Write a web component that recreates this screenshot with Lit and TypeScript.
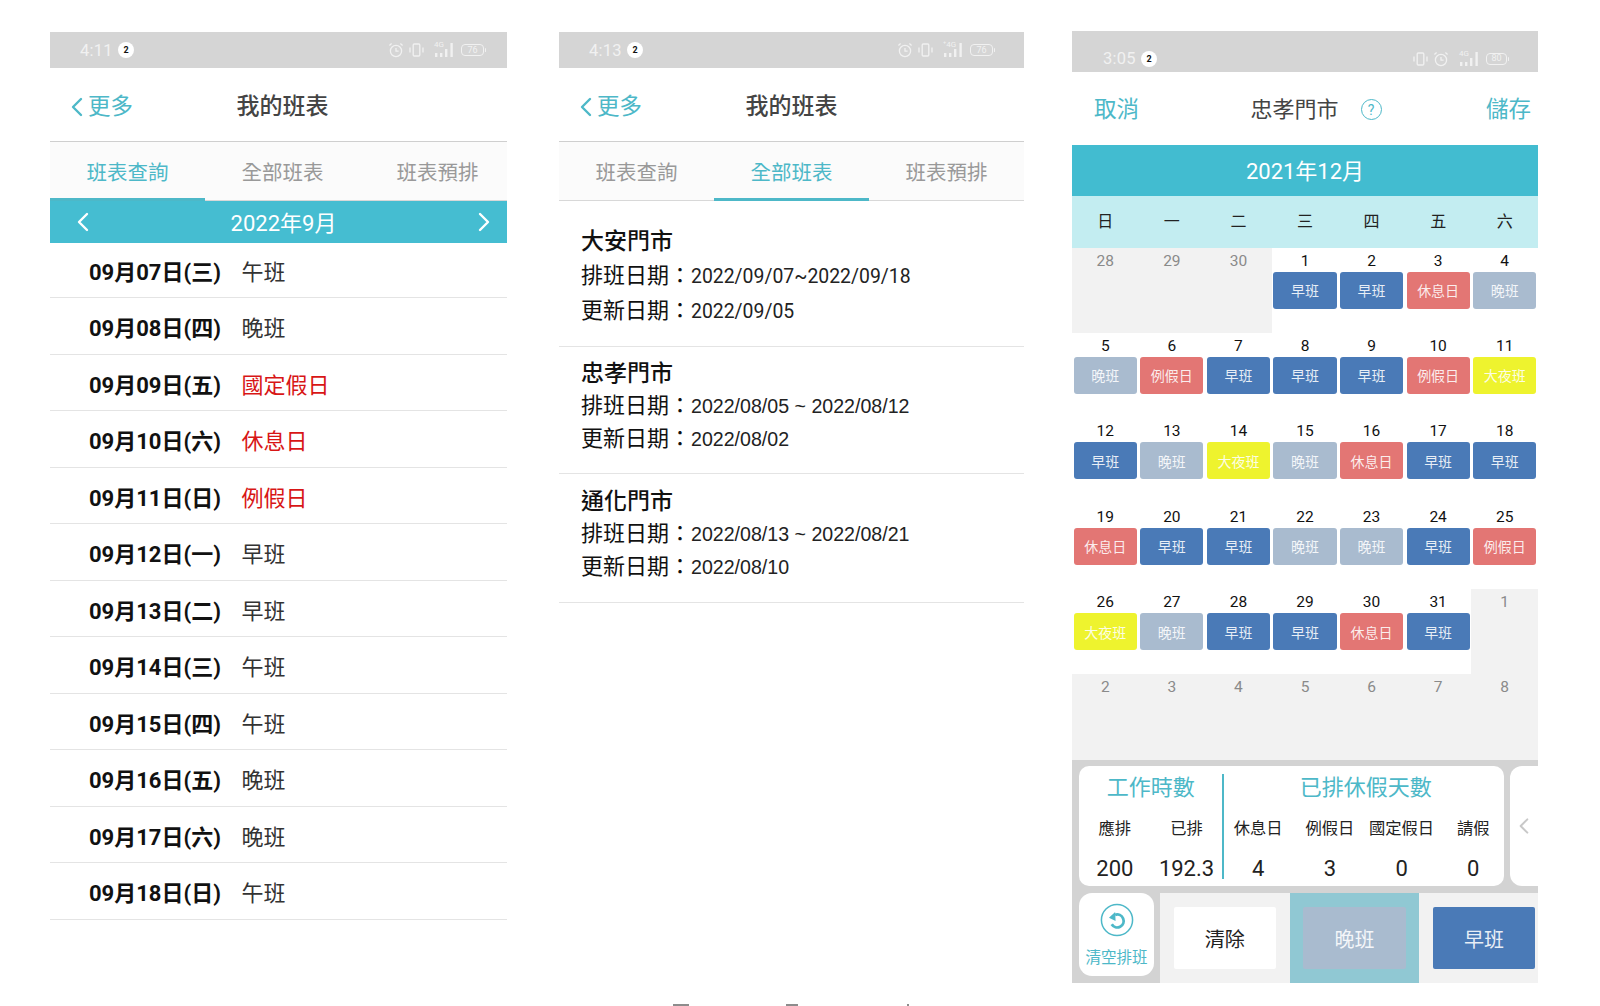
import { LitElement, html, css, svg } from "lit";
import { customElement } from "lit/decorators.js";

const CHEV_L = svg`<polyline points="10,2 2,10 10,18" fill="none" stroke="currentColor" stroke-width="2.4" stroke-linecap="round" stroke-linejoin="round"/>`;
const CHEV_R = svg`<polyline points="2,2 10,10 2,18" fill="none" stroke="currentColor" stroke-width="2.4" stroke-linecap="round" stroke-linejoin="round"/>`;

const chev = (dir: "l" | "r", cls: string) =>
  html`<svg class=${cls} viewBox="0 0 12 20">${dir === "l" ? CHEV_L : CHEV_R}</svg>`;

const alarm = html`<svg class="ic" width="16" height="16" viewBox="0 0 16 16" fill="none" stroke="currentColor" stroke-width="1.3">
  <circle cx="8" cy="9" r="5.6"/><path d="M8 6v3.2h2.6M1.4 3.6 3.6 1.6M14.6 3.6 12.4 1.6"/></svg>`;
const vib = html`<svg class="ic" width="15" height="14" viewBox="0 0 15 14" fill="none" stroke="currentColor" stroke-width="1.3">
  <rect x="4.2" y="1" width="6.6" height="12" rx="1"/><path d="M1 4.5v5M14 4.5v5"/></svg>`;
const signal = (label: string) => html`<span class="sig"><span class="sig-t">${label}</span>
  <svg width="20" height="14" viewBox="0 0 20 14" fill="currentColor">
    <rect x="1" y="10" width="2.4" height="4"/><rect x="6" y="10" width="2.4" height="4"/>
    <rect x="11" y="6" width="2.4" height="8"/><rect x="16.4" y="0" width="2.4" height="14"/></svg></span>`;
const batt = (v: string) => html`<span class="batt"><span>${v}</span></span>`;

const status = (time: string, batV: string, cls: string, order: "av" | "va", sig: string) => html`
  <div class="status ${cls}">
    <span class="time">${time}</span><span class="badge">2</span>
    <span class="icons">
      ${order === "av" ? html`${alarm}${vib}` : html`${vib}${alarm}`}
      ${signal(sig)}${batt(batV)}
    </span>
  </div>`;

const navHead = html`<div class="head">
  <span class="back">${chev("l", "back-c")}更多</span>
  <span class="title">我的班表</span><span></span>
</div>`;

const tabs = (active: number) => html`<div class="tabs">
  ${["班表查詢", "全部班表", "班表預排"].map(
    (t, i) => html`<div class="tab ${i === active ? "on" : ""}">${t}</div>`
  )}
</div>`;

const rows: [string, string, boolean][] = [
  ["09月07日(三)", "午班", false],
  ["09月08日(四)", "晚班", false],
  ["09月09日(五)", "國定假日", true],
  ["09月10日(六)", "休息日", true],
  ["09月11日(日)", "例假日", true],
  ["09月12日(一)", "早班", false],
  ["09月13日(二)", "早班", false],
  ["09月14日(三)", "午班", false],
  ["09月15日(四)", "午班", false],
  ["09月16日(五)", "晚班", false],
  ["09月17日(六)", "晚班", false],
  ["09月18日(日)", "午班", false],
];

const stores = [
  { cls: "s1", name: "大安門市", range: "2022/09/07~2022/09/18", upd: "2022/09/05" },
  { cls: "s2", name: "忠孝門市", range: "2022/08/05 ~ 2022/08/12", upd: "2022/08/02" },
  { cls: "s3", name: "通化門市", range: "2022/08/13 ~ 2022/08/21", upd: "2022/08/10" },
];

type Cell = [number, string, boolean];
const M = "早班", N = "晚班", R = "休息日", L = "例假日", Y = "大夜班";
const cal: Cell[] = [
  [28, "", true], [29, "", true], [30, "", true], [1, M, false], [2, M, false], [3, R, false], [4, N, false],
  [5, N, false], [6, L, false], [7, M, false], [8, M, false], [9, M, false], [10, L, false], [11, Y, false],
  [12, M, false], [13, N, false], [14, Y, false], [15, N, false], [16, R, false], [17, M, false], [18, M, false],
  [19, R, false], [20, M, false], [21, M, false], [22, N, false], [23, N, false], [24, M, false], [25, L, false],
  [26, Y, false], [27, N, false], [28, M, false], [29, M, false], [30, R, false], [31, M, false], [1, "", true],
  [2, "", true], [3, "", true], [4, "", true], [5, "", true], [6, "", true], [7, "", true], [8, "", true],
];
const chipCls: Record<string, string> = { [M]: "m", [N]: "n", [R]: "r", [L]: "r", [Y]: "y" };

const stats: [string, string][] = [
  ["應排", "200"], ["已排", "192.3"], ["休息日", "4"], ["例假日", "3"], ["國定假日", "0"], ["請假", "0"],
];

@customElement("app-root")
export class AppRoot extends LitElement {
  static styles = css`
    :host {
      display: block; position: relative; height: 1006px; overflow: hidden; background: #fff;
      font-family: Roboto, "Noto Sans CJK TC", sans-serif; color: #222;
    }
    .page { display: flex; align-items: flex-start; padding: 31px 0 0 50px; }
    .phone { overflow: hidden; display: flex; flex-direction: column; background: #fff; position: relative; }
    .p1 { width: 457px; margin-top: 1px; }
    .p2 { width: 465px; margin: 1px 0 0 52px; }
    .p3 { width: 466px; margin-left: 48px; height: 952px; }

    .status { display: flex; align-items: center; background: #d5d5d5; color: #f1f1f1; height: 36px; padding-left: 30px; flex: none; }
    .status.tall { height: 41px; padding-top: 14px; box-sizing: border-box; padding-left: 31px; }
    .time { font-size: 16.5px; width: 32px; letter-spacing: .2px; }
    .badge { width: 16px; height: 16px; border-radius: 50%; background: #fff; color: #111; font-size: 9px; font-weight: 700; display: flex; align-items: center; justify-content: center; margin-left: 6px; }
    .icons { margin-left: auto; display: flex; align-items: center; }
    .ic { margin-right: 5px; flex: none; }
    .sig { position: relative; display: flex; margin: 0 7px 0 5px; }
    .sig-t { position: absolute; left: 0; top: -2px; font-size: 8px; line-height: 1; }
    .batt { position: relative; width: 23px; height: 12px; border: 1.2px solid currentColor; border-radius: 4px; font-size: 9px; line-height: 1; display: flex; align-items: center; justify-content: center; box-sizing: border-box; }
    .batt::after { content: ""; position: absolute; right: -3px; top: 3px; width: 1.5px; height: 4px; background: currentColor; border-radius: 1px; }
    .i1 { padding-right: 23px; }
    .i2 { padding-right: 31px; }
    .tall { padding-right: 31px; }
    .tall .batt { width: 21px; }

    .head { width: 465px; height: 69px; padding-top: 4px; display: grid; grid-template-columns: 1fr auto 1fr; align-items: center; border-bottom: 1.5px solid #cfcfcf; flex: none; box-sizing: content-box; }
    .back { display: flex; align-items: center; color: #4db8c8; font-size: 22.5px; line-height: 1; padding-left: 21px; }
    .back-c { width: 12px; height: 20px; margin-right: 5px; }
    .title { font-size: 23px; line-height: 1; color: #444; font-weight: 500; }

    .tabs { width: 465px; height: 58px; display: grid; grid-template-columns: repeat(3, 155px); background: #fbfbfb; border-bottom: 1px solid #d8d8d8; flex: none; }
    .tab { display: flex; align-items: center; justify-content: center; font-size: 20.5px; line-height: 1; color: #999; padding-top: 6px; box-sizing: border-box; border-bottom: 3px solid transparent; margin-bottom: -1px; }
    .tab.on { color: #4db8c8; border-bottom-color: #4db8c8; }

    .month { height: 42px; background: #45bdd1; color: #fff; display: flex; align-items: center; justify-content: space-between; padding: 0 17px 0 27px; flex: none; position: relative; }
    .month-t { font-size: 22px; line-height: 1; padding-top: 4px; }
    .month-c { width: 12px; height: 20px; }

    .list { margin-top: -1.5px; }
    .row { height: 56.5px; box-sizing: border-box; border-bottom: 1.5px solid #e4e4e4; display: grid; grid-template-columns: 152.5px auto; align-items: center; padding: 7px 0 0 39px; font-size: 22px; line-height: 1; }
    .row b { font-weight: 700; color: #111; }
    .row span { color: #333; }
    .row span.red { color: #d81616; }
    .notch { position: absolute; left: 405px; top: 886px; width: 52px; height: 14px; }

    .store { padding: 0 0 0 22px; border-bottom: 1.5px solid #e4e4e4; }
    .s1 { padding-top: 23px; padding-bottom: 18px; }
    .s2 { padding-top: 11px; padding-bottom: 18px; }
    .s3 { padding-top: 11px; padding-bottom: 19px; }
    .store h3 { margin: 0; font-size: 23px; font-weight: 500; color: #111; line-height: 35px; }
    .s2 h3 { line-height: 32px; }
    .s3 h3 { line-height: 33px; }
    .ln { font-size: 22px; line-height: 33.5px; color: #111; white-space: nowrap; }
    .s2 .ln, .s3 .ln { line-height: 32.5px; }
    .ln i { font-style: normal; font-size: 19.6px; font-family: "Liberation Sans", sans-serif; color: #222; }
    .s1 .ln i { font-family: Roboto, sans-serif; font-size: 19.4px; }

    .head3 { height: 71px; padding: 2px 7px 0 22px; display: flex; align-items: center; justify-content: space-between; flex: none; }
    .act { color: #4db8c8; font-size: 22.5px; line-height: 1; }
    .group { display: flex; align-items: center; margin-left: 7px; }
    .group .t { font-size: 22px; color: #444; line-height: 1; }
    .q { width: 19px; height: 19px; border: 1.4px solid #4db8c8; border-radius: 50%; color: #4db8c8; font-size: 14px; line-height: 1; display: flex; align-items: center; justify-content: center; margin-left: 22px; }
    .m3 { height: 49px; padding-top: 2px; background: #42bcd0; color: #fff; display: flex; align-items: center; justify-content: center; font-size: 22px; line-height: 1; flex: none; }
    .wk { height: 51.5px; background: #c3edf1; display: grid; grid-template-columns: repeat(7, 1fr); align-items: center; text-align: center; font-size: 16px; line-height: 1; flex: none; color: #222; }

    .cal { display: grid; grid-template-columns: repeat(7, 1fr); grid-auto-rows: 85.4px; flex: none; }
    .cell { display: flex; flex-direction: column; align-items: stretch; box-sizing: border-box; padding: 5px 1.7px 0; }
    .cell.off { background: #f2f2f2; }
    .cell .d { font-size: 15.5px; line-height: 16px; text-align: center; color: #111; height: 19px; }
    .cell.off .d { color: #8a8a8a; }
    .chip { height: 37px; box-sizing: border-box; padding-top: 2px; border-radius: 3px; display: flex; align-items: center; justify-content: center; font-size: 14px; line-height: 1; color: rgba(255,255,255,.88); }
    .m { background: #4a7ab7; }
    .n { background: #a9bbcf; }
    .r { background: #e37674; }
    .y { background: #eef32e; }

    .band { background: #d3d3d3; display: flex; height: 133px; box-sizing: border-box; padding: 6.5px 0 6.5px 7px; gap: 6px; flex: none; }
    .card { width: 425px; border-radius: 10px; background: #fff; display: grid; grid-template-columns: repeat(6, 71.7px); grid-template-rows: 40px 41px 39px; position: relative; }
    .more { flex: 1; background: #fff; border-radius: 12px 0 0 12px; color: #c8c8c8; display: flex; align-items: center; padding-left: 9px; }
    .more svg { width: 10px; height: 18px; }
    .h1 { grid-column: span 2; color: #4db8c8; font-size: 22px; line-height: 1; display: flex; align-items: center; justify-content: center; padding-top: 3px; box-sizing: border-box; }
    .h2 { grid-column: span 4; }
    .lbl { font-size: 16.3px; line-height: 1; display: flex; align-items: center; justify-content: center; color: #222; padding-top: 4px; box-sizing: border-box; white-space: nowrap; }
    .val { font-size: 22px; line-height: 1; display: flex; align-items: center; justify-content: center; color: #222; padding-top: 4px; box-sizing: border-box; }
    .div { position: absolute; left: 143px; top: 8px; bottom: 7px; width: 1.5px; background: #4db8c8; }

    .tools { display: flex; height: 90px; flex: none; background: #f2f2f2; }
    .left { width: 88px; background: #d3d3d3; padding-left: 7px; box-sizing: border-box; flex: none; }
    .clear { width: 75px; height: 83.5px; border-radius: 13px; background: #fff; display: flex; flex-direction: column; align-items: center; padding-top: 10px; box-sizing: border-box; color: #4db8c8; font-size: 15.5px; line-height: 1; white-space: nowrap; }
    .clear svg { width: 34px; height: 34px; margin-bottom: 14px; flex: none; }
    .slot { width: 129.6px; flex: none; padding: 14px 13.5px 13.5px; box-sizing: border-box; }
    .slot.sel { background: #90c8d3; }
    .btn { height: 100%; box-sizing: border-box; padding-top: 4px; border-radius: 2px; display: flex; align-items: center; justify-content: center; font-size: 20px; line-height: 1; color: rgba(255,255,255,.88); }
    .btn.w { background: #fff; color: #222; }

    .bit { position: absolute; top: 1004px; height: 2px; background: #8d8d8d; }
    .b1 { left: 673px; width: 16px; }
    .b2 { left: 786px; width: 12px; }
    .b3 { left: 907px; width: 2px; }
  `;

  render() {
    return html`
      <div class="page">
        <section class="phone p1">
          ${status("4:11", "76", "i1", "av", "4G")}
          ${navHead}
          ${tabs(0)}
          <div class="month">${chev("l", "month-c")}<span class="month-t">2022年9月</span>${chev("r", "month-c")}</div>
          <div class="list">
            ${rows.map(([d, s, red]) => html`<div class="row"><b>${d}</b><span class=${red ? "red" : ""}>${s}</span></div>`)}
          </div>
          <svg class="notch" viewBox="0 0 52 14" fill="#fff" stroke="#eee" stroke-width="1.2"><path d="M2 12 26 3 50 12"/></svg>
        </section>

        <section class="phone p2">
          ${status("4:13", "76", "i2", "av", "⁺4G")}
          ${navHead}
          ${tabs(1)}
          ${stores.map(s => html`<div class="store ${s.cls}">
            <h3>${s.name}</h3>
            <div class="ln">排班日期：<i>${s.range}</i></div>
            <div class="ln">更新日期：<i>${s.upd}</i></div>
          </div>`)}
        </section>

        <section class="phone p3">
          ${status("3:05", "80", "tall", "va", "4G")}
          <div class="head3">
            <span class="act">取消</span>
            <span class="group"><span class="t">忠孝門市</span><span class="q">?</span></span>
            <span class="act">儲存</span>
          </div>
          <div class="m3">2021年12月</div>
          <div class="wk">${["日", "一", "二", "三", "四", "五", "六"].map(w => html`<span>${w}</span>`)}</div>
          <div class="cal">
            ${cal.map(([d, s, off]) => html`<div class="cell ${off ? "off" : ""}">
              <span class="d">${d}</span>
              ${s ? html`<span class="chip ${chipCls[s]}">${s}</span>` : ""}
            </div>`)}
          </div>
          <div class="band">
            <div class="card">
              <div class="h1">工作時數</div><div class="h1 h2">已排休假天數</div>
              ${stats.map(([l]) => html`<div class="lbl">${l}</div>`)}
              ${stats.map(([, v]) => html`<div class="val">${v}</div>`)}
              <span class="div"></span>
            </div>
            <div class="more"><svg viewBox="0 0 12 20">${CHEV_L}</svg></div>
          </div>
          <div class="tools">
            <div class="left">
              <div class="clear">
                <svg viewBox="0 0 36 36" fill="none" stroke="#4db8c8">
                  <circle cx="18" cy="18" r="16.5" stroke-width="1.6"/>
                  <path d="M16 12.6A6.8 6.8 0 1 1 12.4 22.6" stroke-width="3"/>
                  <polygon points="9.5,15.5 16,9.5 16.5,19" fill="#4db8c8" stroke="none"/>
                </svg>
                清空排班
              </div>
            </div>
            <div class="slot"><div class="btn w">清除</div></div>
            <div class="slot sel"><div class="btn n">晚班</div></div>
            <div class="slot"><div class="btn m">早班</div></div>
          </div>
        </section>
      </div>
      <span class="bit b1"></span><span class="bit b2"></span><span class="bit b3"></span>
    `;
  }
}
